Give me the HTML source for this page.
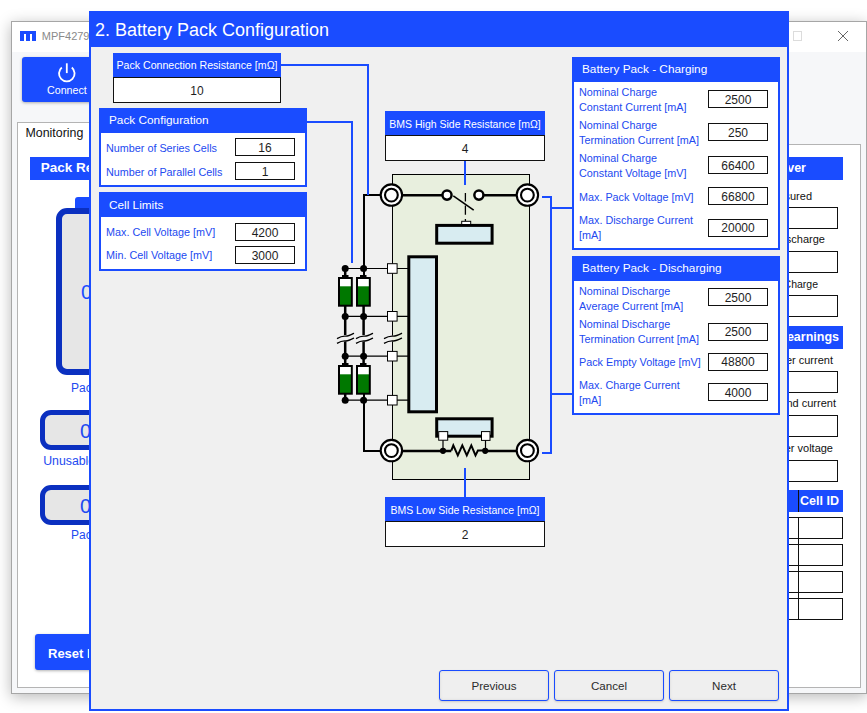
<!DOCTYPE html>
<html><head><meta charset="utf-8">
<style>
*{box-sizing:border-box;margin:0;padding:0}
html,body{width:867px;height:713px;overflow:hidden;background:#fff;font-family:"Liberation Sans",sans-serif;position:relative}
.a{position:absolute}
.blue{background:#1a4cff}
.t{position:absolute;white-space:nowrap;line-height:1}
#win{left:11px;top:21px;width:856px;height:673px;border:1px solid #a6a6a6;background:#f6f7f9;box-shadow:0 3px 14px rgba(0,0,0,.28)}
#tb{left:0;top:0;width:854px;height:30px;background:#fff}
.inp{position:absolute;background:#fff;border:1px solid #111;text-align:center;color:#1e1e1e;font-size:12px}
.i6{width:60px;height:18px;line-height:16px;padding-top:.5px}
.lbl{position:absolute;white-space:nowrap;color:#2249f0;font-size:10.8px;line-height:15px}
.pnl{position:absolute;border:2px solid #1a4cff;background:#fff}
.ph{position:absolute;left:0;top:0;right:0;background:#1a4cff;color:#fff;font-size:11.8px;white-space:nowrap}
.btn{position:absolute;top:670px;width:110px;height:31px;border:1.5px solid #1a4cff;border-radius:3px;background:#efefef;color:#2b2b2b;font-size:11.6px;text-align:center;line-height:30px;box-shadow:inset 0 0 3px rgba(0,0,0,.10),0 1px 2px rgba(0,0,0,.15)}
.bt{position:absolute;border:5px solid #0b30c0;border-radius:11px;background:#e6e6e6}
</style></head><body>

<!-- background window -->
<div id="win" class="a">
  <div id="tb" class="a"></div>
</div>
<!-- logo -->
<svg class="a" style="left:20px;top:31px" width="16" height="10"><path d="M0 0H16V10H12V3H10V10H6V3H4V10H0Z" fill="#1a4cff"/></svg>
<div class="t" style="left:41.8px;top:30.5px;font-size:11px;color:#8a8a8a">MPF4279</div>
<div class="a" style="left:793px;top:31px;width:9px;height:10px;border:1px solid #dcdcdc"></div>
<svg class="a" style="left:837px;top:30px" width="12" height="12"><path d="M1 1L11 11M11 1L1 11" stroke="#666" stroke-width="1"/></svg>

<!-- connect button -->
<div class="a blue" style="left:22px;top:57px;width:80px;height:45px;border-radius:3px;box-shadow:0 1px 3px rgba(0,0,0,.3)"></div>
<svg class="a" style="left:56px;top:62px" width="22" height="22"><path d="M5.8 5.5A7.8 7.8 0 1 0 15.8 5.5" fill="none" stroke="#fff" stroke-width="1.8"/><path d="M10.8 1.3V11.1" stroke="#fff" stroke-width="1.8"/></svg>
<div class="t" style="left:47px;top:84.7px;font-size:10.7px;color:#fff">Connect</div>

<!-- tab -->
<div class="a" style="left:17px;top:144px;width:844px;height:544px;background:#fff;border:1px solid #b4b4b4"></div>
<div class="a" style="left:17px;top:122px;width:80px;height:23px;background:#fff;border:1px solid #b4b4b4;border-bottom:none"></div>
<div class="t" style="left:25.5px;top:127.3px;font-size:12.4px;color:#111">Monitoring</div>

<!-- left content -->
<div class="a blue" style="left:30px;top:157px;width:80px;height:23px"></div>
<div class="t" style="left:40.7px;top:161.2px;font-size:13.5px;color:#fff;font-weight:bold">Pack Re</div>
<div class="a" style="left:75px;top:197px;width:40px;height:14px;background:#1a4cff;border-radius:3px 3px 0 0"></div>
<div class="bt" style="left:56px;top:208px;width:80px;height:167px;border-width:6px"></div>
<div class="t" style="left:81px;top:282.3px;font-size:20px;color:#1a4cff">0</div>
<div class="t" style="left:71px;top:382px;font-size:12px;color:#2249f0">Pac</div>
<div class="bt" style="left:40px;top:410px;width:80px;height:40px"></div>
<div class="t" style="left:80px;top:421px;font-size:20px;color:#2249f0">0</div>
<div class="t" style="left:43.2px;top:455px;font-size:12.3px;color:#2249f0">Unusable</div>
<div class="bt" style="left:40px;top:485px;width:80px;height:40px"></div>
<div class="t" style="left:80px;top:496px;font-size:20px;color:#2249f0">0</div>
<div class="t" style="left:71px;top:529px;font-size:12px;color:#2249f0">Pac</div>
<div class="a blue" style="left:35px;top:634px;width:80px;height:36px;border-radius:3px;box-shadow:0 1px 3px rgba(0,0,0,.3)"></div>
<div class="t" style="left:48px;top:647px;font-size:13px;color:#fff;font-weight:bold">Reset I</div>

<!-- right content -->
<div class="a blue" style="left:770px;top:157px;width:73px;height:23px"></div>
<div class="t" style="left:700px;top:162px;width:106px;text-align:right;font-size:12.5px;color:#fff;font-weight:bold">ver</div>
<div class="t" style="left:700px;top:190.6px;width:112px;text-align:right;font-size:11px;color:#111">Measured</div>
<div class="inp" style="left:760px;top:207px;width:78px;height:22px"></div>
<div class="t" style="left:700px;top:234.3px;width:125px;text-align:right;font-size:11px;color:#111">Discharge</div>
<div class="inp" style="left:760px;top:251px;width:78px;height:22px"></div>
<div class="t" style="left:700px;top:278.5px;width:118px;text-align:right;font-size:10.5px;color:#111">Charge</div>
<div class="inp" style="left:760px;top:295px;width:78px;height:22px"></div>
<div class="a blue" style="left:770px;top:326px;width:73px;height:23px"></div>
<div class="t" style="left:700px;top:331px;width:139px;text-align:right;font-size:12.5px;color:#fff;font-weight:bold">Learnings</div>
<div class="t" style="left:700px;top:354.7px;width:133px;text-align:right;font-size:11px;color:#111">Under current</div>
<div class="inp" style="left:760px;top:371px;width:78px;height:22px"></div>
<div class="t" style="left:700px;top:398.3px;width:136px;text-align:right;font-size:11px;color:#111">End current</div>
<div class="inp" style="left:760px;top:415px;width:78px;height:22px"></div>
<div class="t" style="left:700px;top:442.7px;width:133px;text-align:right;font-size:11px;color:#111">Under voltage</div>
<div class="inp" style="left:760px;top:460px;width:78px;height:22px"></div>
<div class="a blue" style="left:770px;top:490px;width:73px;height:22px"></div>
<div class="a" style="left:798px;top:490px;width:1px;height:22px;background:#111"></div>
<div class="t" style="left:700px;top:495px;width:139px;text-align:right;font-size:12.5px;color:#fff;font-weight:bold">Cell ID</div>
<div class="inp" style="left:760px;top:517px;width:83px;height:22px"></div>
<div class="inp" style="left:760px;top:544px;width:83px;height:22px"></div>
<div class="inp" style="left:760px;top:571px;width:83px;height:22px"></div>
<div class="inp" style="left:760px;top:598px;width:83px;height:22px"></div>
<div class="a" style="left:798px;top:517px;width:1px;height:103px;background:#111"></div>

<!-- dialog -->
<div class="a" style="left:89px;top:11px;width:700px;height:700px;background:#f0f0f0;border:2px solid #1a4cff"></div>
<div class="a blue" style="left:89px;top:11px;width:700px;height:36px"></div>
<div class="t" style="left:95px;top:21px;font-size:18px;color:#fff">2. Battery Pack Configuration</div>


<!-- circuit svg -->
<svg class="a" style="left:0;top:0" width="867" height="713" viewBox="0 0 867 713">

  <rect x="392.5" y="174.5" width="137" height="305" fill="#e8efde" stroke="#000" stroke-width="1"/>
  <!-- relay rects -->
  <rect x="436.7" y="225.4" width="55.4" height="17.8" fill="#d8ecf1" stroke="#000" stroke-width="3"/>
  <rect x="408.8" y="256.8" width="27.7" height="155" fill="#d8ecf1" stroke="#000" stroke-width="3"/>
  <rect x="436.7" y="418.8" width="55.4" height="17.4" fill="#d8ecf1" stroke="#000" stroke-width="3"/>
  <!-- wires -->
  <g stroke="#000" fill="none">
    <path d="M363 195H381" stroke-width="2"/>
    <path d="M401 195.2H442" stroke-width="2.6"/>
    <path d="M484 195.2H517" stroke-width="2.6"/>
    <path d="M453.3 195.8L473.7 210.2" stroke-width="1.6"/>
    <path d="M465.4 193V201.5M465.4 205.5V214.8M465.4 219V221.5" stroke-width="1.3"/>
    <path d="M364 194V275" stroke-width="2"/>
    <path d="M345.2 268.5V275" stroke-width="2.5"/>
    <path d="M345.2 306V335M363.6 306V335M345.2 341.5V365M363.6 341.5V365" stroke-width="2.5"/>
    <path d="M345.2 394V400.2" stroke-width="2.5"/><path d="M364 394V451H381" stroke-width="2"/>
    <path d="M345.2 268.5H387.5M345.2 316.4H387.5M345.2 356.2H387.5M345.2 400.2H387.5" stroke-width="1.2"/>
    <path d="M397 268.5H408M397 316.4H408M397 356.2H408M397 400.2H408" stroke-width="1.2"/>
    <path d="M401.5 451H443M485.2 451H517" stroke-width="2.5"/>
    <path d="M451.3 450.6L453.3 445.4L457.8 455.4L462.3 445.4L466.8 455.4L471.3 445.4L475.5 455.4L477.9 450.6H485" stroke-width="2"/>
    <path d="M443 451H451.3" stroke-width="2.5"/>
    <path d="M443 440V451M485.5 440V451" stroke-width="1.2"/>
  </g>
  <rect x="392" y="335.6" width="1" height="5.8" fill="#eceee6"/>
  <!-- break marks -->
  <g stroke="#000" fill="none" stroke-width="1.3">
    <path d="M337 338.6C340.4 336.6 342.95 336.0 345.5 336.2S350.6 335.0 354 333.2M337 343.4C340.4 341.4 342.95 340.79999999999995 345.5 341.0S350.6 339.8 354 338M356 338.6C359.4 336.6 361.95 336.0 364.5 336.2S369.6 335.0 373 333.2M356 343.4C359.4 341.4 361.95 340.79999999999995 364.5 341.0S369.6 339.8 373 338M384 338.6C387.6 336.6 390.3 336.0 393.0 336.2S398.4 335.0 402 333.2M384 343.4C387.6 341.4 390.3 340.79999999999995 393.0 341.0S398.4 339.8 402 338"/>
  </g>
  <!-- cells -->
  <g stroke="#000" stroke-width="2">
    <rect x="339" y="278" width="12.8" height="27.7" fill="#007800"/>
    <rect x="357" y="278" width="12.8" height="27.7" fill="#007800"/>
    <rect x="339" y="366" width="12.8" height="27.7" fill="#007800"/>
    <rect x="357" y="366" width="12.8" height="27.7" fill="#007800"/>
  </g>
  <g fill="#fff">
    <rect x="340" y="279" width="10.8" height="7.3"/>
    <rect x="358" y="279" width="10.8" height="7.3"/>
    <rect x="340" y="367" width="10.8" height="7.3"/>
    <rect x="358" y="367" width="10.8" height="7.3"/>
  </g>
  <g fill="#000">
    <rect x="342" y="275" width="6.5" height="3"/>
    <rect x="360" y="275" width="6.5" height="3"/>
    <rect x="342" y="363" width="6.5" height="3"/>
    <rect x="360" y="363" width="6.5" height="3"/>
  </g>
  <!-- junction dots -->
  <g fill="#000">
    <circle cx="345.2" cy="268.5" r="3.5"/><circle cx="363.6" cy="268.5" r="3.5"/>
    <circle cx="345.2" cy="316.4" r="3.5"/><circle cx="363.6" cy="316.4" r="3.5"/>
    <circle cx="345.2" cy="356.2" r="3.5"/><circle cx="363.6" cy="356.2" r="3.5"/>
    <circle cx="345.2" cy="400.2" r="3.5"/><circle cx="363.6" cy="400.2" r="3.5"/>
    <circle cx="443" cy="450.8" r="3.1"/><circle cx="485.2" cy="450.8" r="3.1"/>
  </g>
  <!-- squares -->
  <g fill="#fff" stroke="#000" stroke-width="1">
    <rect x="387.5" y="263.7" width="9.6" height="9.6"/>
    <rect x="387.5" y="311.5" width="9.6" height="9.6"/>
    <rect x="387.5" y="351.4" width="9.6" height="9.6"/>
    <rect x="387.5" y="395.4" width="9.6" height="9.6"/>
    <rect x="438.7" y="431.6" width="9" height="8.6"/>
    <rect x="481.5" y="431.6" width="8.5" height="8.8"/>
    <rect x="461.7" y="221.3" width="9" height="3.2"/>
  </g>
  <!-- switch contacts -->
  <g fill="#fff" stroke="#000" stroke-width="2.5">
    <circle cx="447" cy="195.1" r="4.55"/>
    <circle cx="478.9" cy="195.1" r="4.55"/>
  </g>
  <g fill="none" stroke="#1a4cff" stroke-width="2">
    <path d="M281 65H368V195"/>
    <path d="M307 122H352V263"/>
    <path d="M465 161V185"/>
    <path d="M465 468V497"/>
    <path d="M542 197H551V453H542"/>
    <path d="M551 208H573"/>
    <path d="M551 394H573"/>
  </g>
  <!-- terminals -->
  <g fill="#fff" stroke="#000">
    <g transform="translate(391.4 195.1)"><circle r="10.7" stroke-width="2.1"/><circle r="6.4" stroke-width="2.1"/></g>
    <g transform="translate(527.4 195.1)"><circle r="10.7" stroke-width="2.1"/><circle r="6.4" stroke-width="2.1"/></g>
    <g transform="translate(391.4 450.6)"><circle r="10.7" stroke-width="2.1"/><circle r="6.4" stroke-width="2.1"/></g>
    <g transform="translate(527.4 450.6)"><circle r="10.7" stroke-width="2.1"/><circle r="6.4" stroke-width="2.1"/></g>
  </g>
</svg>

<!-- Pack connection resistance -->
<div class="a blue" style="left:113px;top:53px;width:168px;height:24px"></div>
<div class="t" style="left:113px;top:60px;width:168px;text-align:center;font-size:10.6px;color:#fff">Pack Connection Resistance [m&#937;]</div>
<div class="inp" style="left:113px;top:77px;width:168px;height:26px;line-height:23px;padding-top:2px">10</div>

<!-- Pack configuration -->
<div class="pnl" style="left:99px;top:108px;width:208px;height:79px">
  <div class="ph" style="height:23px;padding:3px 0 0 8px">Pack Configuration</div>
</div>
<div class="lbl" style="left:106px;top:140.8px">Number of Series Cells</div>
<div class="inp i6" style="left:235px;top:138px">16</div>
<div class="lbl" style="left:106px;top:164.8px">Number of Parallel Cells</div>
<div class="inp i6" style="left:235px;top:162px">1</div>

<!-- Cell limits -->
<div class="pnl" style="left:99px;top:192px;width:208px;height:79px">
  <div class="ph" style="height:23px;padding:4px 0 0 8px">Cell Limits</div>
</div>
<div class="lbl" style="left:106px;top:225px">Max. Cell Voltage [mV]</div>
<div class="inp i6" style="left:235px;top:223px">4200</div>
<div class="lbl" style="left:106px;top:248px">Min. Cell Voltage [mV]</div>
<div class="inp i6" style="left:235px;top:246px">3000</div>

<!-- BMS high -->
<div class="a blue" style="left:385px;top:111px;width:160px;height:24px"></div>
<div class="t" style="left:385px;top:119px;width:160px;text-align:center;font-size:10.5px;color:#fff">BMS High Side Resistance [m&#937;]</div>
<div class="inp" style="left:385px;top:135px;width:160px;height:26px;line-height:24px;padding-top:1px">4</div>

<!-- BMS low -->
<div class="a blue" style="left:385px;top:497px;width:160px;height:24px"></div>
<div class="t" style="left:385px;top:504.5px;width:160px;text-align:center;font-size:10.5px;color:#fff">BMS Low Side Resistance [m&#937;]</div>
<div class="inp" style="left:385px;top:521px;width:160px;height:26px;line-height:24px;padding-top:1px">2</div>

<!-- Charging -->
<div class="pnl" style="left:572px;top:57px;width:208px;height:193px">
  <div class="ph" style="height:23px;padding:3px 0 0 8px">Battery Pack - Charging</div>
</div>
<div class="lbl" style="left:579px;top:85px">Nominal Charge<br>Constant Current [mA]</div>
<div class="inp i6" style="left:708px;top:90px">2500</div>
<div class="lbl" style="left:579px;top:118px">Nominal Charge<br>Termination Current [mA]</div>
<div class="inp i6" style="left:708px;top:123px">250</div>
<div class="lbl" style="left:579px;top:151px">Nominal Charge<br>Constant Voltage [mV]</div>
<div class="inp i6" style="left:708px;top:156px">66400</div>
<div class="lbl" style="left:579px;top:190px">Max. Pack Voltage [mV]</div>
<div class="inp i6" style="left:708px;top:187px">66800</div>
<div class="lbl" style="left:579px;top:213px">Max. Discharge Current<br>[mA]</div>
<div class="inp i6" style="left:708px;top:218.5px">20000</div>

<!-- Discharging -->
<div class="pnl" style="left:572px;top:256px;width:208px;height:159px">
  <div class="ph" style="height:23px;padding:3px 0 0 8px">Battery Pack - Discharging</div>
</div>
<div class="lbl" style="left:579px;top:284px">Nominal Discharge<br>Average Current [mA]</div>
<div class="inp i6" style="left:708px;top:288px">2500</div>
<div class="lbl" style="left:579px;top:317px">Nominal Discharge<br>Termination Current [mA]</div>
<div class="inp i6" style="left:708px;top:322.5px">2500</div>
<div class="lbl" style="left:579px;top:354.8px">Pack Empty Voltage [mV]</div>
<div class="inp i6" style="left:708px;top:352.5px">48800</div>
<div class="lbl" style="left:579px;top:378px">Max. Charge Current<br>[mA]</div>
<div class="inp i6" style="left:708px;top:383px">4000</div>

<!-- buttons -->
<div class="btn" style="left:439px">Previous</div>
<div class="btn" style="left:554px">Cancel</div>
<div class="btn" style="left:669px">Next</div>

</body></html>
